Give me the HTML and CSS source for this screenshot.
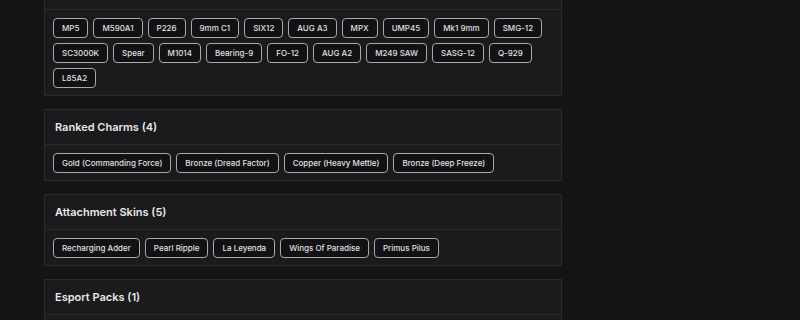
FILE: index.html
```html
<!DOCTYPE html>
<html>
<head>
<meta charset="utf-8">
<link rel="stylesheet" href="styles.css">
</head>
<body>
<div class="page">
  <section class="card first">
    <div class="card-head"><h2>Weapon Skins</h2></div>
    <div class="tags">
      <span class="tag">MP5</span><span class="tag">M590A1</span><span class="tag">P226</span><span class="tag">9mm C1</span><span class="tag">SIX12</span><span class="tag">AUG A3</span><span class="tag">MPX</span><span class="tag">UMP45</span><span class="tag">Mk1 9mm</span><span class="tag">SMG-12</span>
      <span class="tag">SC3000K</span><span class="tag">Spear</span><span class="tag">M1014</span><span class="tag">Bearing-9</span><span class="tag">FO-12</span><span class="tag">AUG A2</span><span class="tag">M249 SAW</span><span class="tag">SASG-12</span><span class="tag">Q-929</span>
      <span class="tag">L85A2</span>
    </div>
  </section>
  <section class="card">
    <div class="card-head"><h2>Ranked Charms (4)</h2></div>
    <div class="tags">
      <span class="tag">Gold (Commanding Force)</span><span class="tag">Bronze (Dread Factor)</span><span class="tag">Copper (Heavy Mettle)</span><span class="tag">Bronze (Deep Freeze)</span>
    </div>
  </section>
  <section class="card">
    <div class="card-head"><h2>Attachment Skins (5)</h2></div>
    <div class="tags">
      <span class="tag">Recharging Adder</span><span class="tag">Pearl Ripple</span><span class="tag">La Leyenda</span><span class="tag">Wings Of Paradise</span><span class="tag">Primus Pilus</span>
    </div>
  </section>
  <section class="card">
    <div class="card-head"><h2>Esport Packs (1)</h2></div>
    <div class="tags">
      <span class="tag">Pack</span>
    </div>
  </section>
</div>
</body>
</html>
```
FILE: styles.css
```css
html, body {
  margin: 0;
  padding: 0;
  background: #141316;
  height: 100%;
  overflow: hidden;
}
body {
  font-family: Inter, "Noto Sans", sans-serif;
  color: #e6e6e6;
}
.page {
  padding-left: 44px;
  width: 518px;
  display: flex;
  flex-direction: column;
  gap: 13px;
}
.card {
  background: #1b1a1d;
  border: 1px solid #2a292c;
  box-sizing: border-box;
}
.card.first {
  margin-top: -26px;
}
.card-head {
  height: 34px;
  display: flex;
  align-items: center;
  padding: 0 10px;
  border-bottom: 1px solid #2a292c;
}
.card-head h2 {
  margin: 0;
  font-size: 11px;
  font-weight: 600;
  color: #e8e8e8;
}
.tags {
  display: flex;
  flex-wrap: wrap;
  gap: 5px 5px;
  padding: 8px 8px 7px;
}
.tag {
  box-sizing: border-box;
  height: 20px;
  display: inline-flex;
  align-items: center;
  padding: 0 8px;
  border: 1.5px solid #a9a9a9;
  border-radius: 4px;
  background: #121114;
  font-size: 8px;
  font-weight: 500;
  color: #e0e0e0;
}
```
